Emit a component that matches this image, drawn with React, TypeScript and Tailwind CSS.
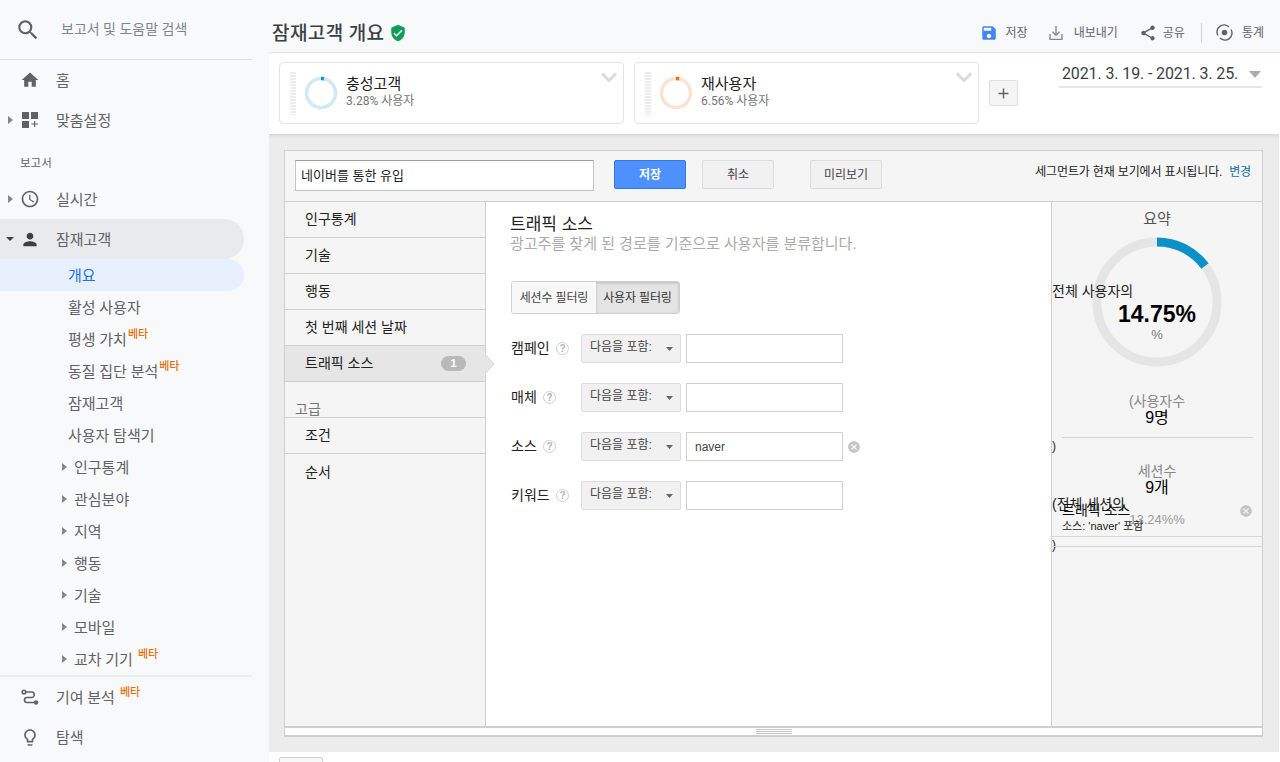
import { MdSearch, MdHome, MdAccessTime, MdPerson, MdLightbulbOutline, MdVerifiedUser, MdSave, MdShare, MdCancel, MdAdd } from "react-icons/md";

const navFont = { fontFamily: '"Roboto", "Noto Sans CJK KR", sans-serif' };

function CaretRight() {
  return (
    <svg width="5" height="8" viewBox="0 0 5 8" className="shrink-0">
      <path d="M0 0l5 4-5 4z" fill="#80868b" />
    </svg>
  );
}

function CaretDown({ color = "#757575", w = 8, h = 4 }: { color?: string; w?: number; h?: number }) {
  return (
    <svg width={w} height={h} viewBox="0 0 8 4" preserveAspectRatio="none" className="shrink-0">
      <path d="M0 0h8l-4 4z" fill={color} />
    </svg>
  );
}

function Beta({ className = "" }: { className?: string }) {
  return <sup className={`text-[11px] font-medium text-[#e8710a] leading-none -top-[7px] relative ${className}`}>베타</sup>;
}

function TopItem({ icon, label, caret, active, beta }: { icon: React.ReactNode; label: string; caret?: "right" | "down"; active?: boolean; beta?: boolean }) {
  return (
    <div className={`relative flex items-center h-10 mr-[25px] rounded-r-[20px] ${active ? "bg-[#e8eaed]" : ""}`}>
      <div className="w-[8px] ml-[6px] flex justify-center">
        {caret === "right" && <CaretRight />}
        {caret === "down" && <CaretDown color="#3c4043" />}
      </div>
      <div className="w-[20px] ml-[6px] flex justify-center text-[#5f6368]">{icon}</div>
      <span className="ml-[16px] mt-[2px] text-[15px] text-[#5f6368] whitespace-nowrap">
        {label}
        {beta && <Beta className="ml-[5px]" />}
      </span>
    </div>
  );
}

function SubItem({ label, active, caret, beta, gap }: { label: string; active?: boolean; caret?: boolean; beta?: boolean; gap?: boolean }) {
  return (
    <div className={`flex items-center h-8 mr-[25px] rounded-r-[20px] ${caret ? "pl-[62px]" : "pl-[68px]"} ${active ? "bg-[#e8f0fe]" : ""}`}>
      {caret && <CaretRight />}
      <span className={`${caret ? "ml-[7px]" : ""} mt-[2px] text-[15px] whitespace-nowrap ${active ? "text-[#1a73e8]" : "text-[#5f6368]"}`}>
        {label}
        {beta && <Beta className={gap ? "ml-[5px]" : "ml-[1px]"} />}
      </span>
    </div>
  );
}

function Sidebar() {
  return (
    <div className="w-[269px] shrink-0 h-[762px] bg-[#f8f9fb] overflow-hidden" style={navFont}>
      <div className="flex items-center h-[60px] mr-[17px] border-b border-[#e0e0e0]">
        <MdSearch size={26} className="ml-[15px] text-[#5f6368]" />
        <span className="ml-[20px] text-[14px] text-[#80868b] -mt-[1px]">보고서 및 도움말 검색</span>
      </div>
      <TopItem label="홈" icon={<MdHome size={20} />} />
      <TopItem
        label="맞춤설정"
        caret="right"
        icon={
          <svg width="16" height="16" viewBox="0 0 16 16" fill="#5f6368">
            <rect width="7" height="7" />
            <rect x="9" width="7" height="7" />
            <rect y="9" width="7" height="7" />
            <path d="M12 9h1.2v2.4H16v1.2h-2.8V15H12v-2.4H9.4v-1.2H12z" />
          </svg>
        }
      />
      <div className="h-[39px] flex items-end pb-[7px] pl-[20px] text-[11.5px] text-[#5f6368]">보고서</div>
      <TopItem label="실시간" caret="right" icon={<MdAccessTime size={20} />} />
      <TopItem label="잠재고객" caret="down" active icon={<MdPerson size={21} className="text-[#3c4043]" />} />
      <SubItem label="개요" active />
      <SubItem label="활성 사용자" />
      <SubItem label="평생 가치" beta />
      <SubItem label="동질 집단 분석" beta />
      <SubItem label="잠재고객" />
      <SubItem label="사용자 탐색기" />
      <SubItem label="인구통계" caret />
      <SubItem label="관심분야" caret />
      <SubItem label="지역" caret />
      <SubItem label="행동" caret />
      <SubItem label="기술" caret />
      <SubItem label="모바일" caret />
      <SubItem label="교차 기기" caret beta gap />
      <div className="h-[2px] mr-[17px] bg-[#ececee]" />
      <TopItem
        label="기여 분석"
        beta
        icon={
          <svg width="18" height="16" viewBox="0 0 18 16" fill="none" stroke="#5f6368" strokeWidth="1.6">
            <circle cx="3" cy="3" r="1.8" />
            <path d="M5 3h5.5a2.6 2.6 0 0 1 0 5.5H6a2.5 2.5 0 0 0 0 5h7" />
            <circle cx="15" cy="13.5" r="2.2" fill="#5f6368" stroke="none" />
          </svg>
        }
      />
      <TopItem label="탐색" icon={<MdLightbulbOutline size={21} />} />
    </div>
  );
}

function Action({ icon, label, className = "" }: { icon: React.ReactNode; label: string; className?: string }) {
  return (
    <div className={`flex items-center text-[12px] text-[#5f6368] ${className}`}>
      {icon}
      <span>{label}</span>
    </div>
  );
}

function Header() {
  return (
    <div className="h-[53px] shrink-0 bg-[#f8f9fb] border-b border-[#e4e4e4] flex items-center pt-[13px] pl-[3px] pr-[16px]">
      <h1 className="text-[19px] font-medium text-[#3c4043] mt-[3px] tracking-[0.4px]">잠재고객 개요</h1>
      <MdVerifiedUser size={18} className="ml-[5px] text-[#0f9d58]" />
      <div className="ml-auto flex items-center">
        <Action icon={<MdSave size={18} className="text-[#4285f4] mr-[8px]" />} label="저장" />
        <Action
          className="ml-[20px]"
          icon={
            <svg width="16" height="16" viewBox="0 0 16 16" fill="none" stroke="#80868b" strokeWidth="1.3" className="mr-[10px]">
              <path d="M8 1v9M4.5 6.8L8 10.3l3.5-3.5M2 9v5.3h12V9" />
            </svg>
          }
          label="내보내기"
        />
        <Action className="ml-[21px]" icon={<MdShare size={18} className="text-[#5f6368] mr-[6px]" />} label="공유" />
        <div className="w-px h-[20px] bg-[#d5d5d5] ml-[16px]" />
        <Action
          className="ml-[14px]"
          icon={
            <svg width="17" height="17" viewBox="0 0 17 17" fill="none" stroke="#5f6368" strokeWidth="1.4" className="mr-[9px]">
              <path d="M2 11.5A7 7 0 0 1 13 3M15 5.5A7 7 0 0 1 4 14" />
              <circle cx="8.5" cy="8.5" r="2.8" fill="#5f6368" stroke="none" />
            </svg>
          }
          label="통계"
        />
      </div>
    </div>
  );
}

function Donut({ color, track, rotate }: { color: string; track: string; rotate: number }) {
  return (
    <svg width="34" height="34" viewBox="0 0 34 34">
      <circle cx="17" cy="17" r="14.5" fill="none" stroke={track} strokeWidth="3.5" />
      <circle cx="17" cy="17" r="14.5" fill="none" stroke={color} strokeWidth="3.5" pathLength={100} strokeDasharray={`${rotate} 100`} transform="rotate(-90 17 17)" />
    </svg>
  );
}

function SegmentCard({ title, sub, color, track, pct }: { title: string; sub: string; color: string; track: string; pct: number }) {
  return (
    <div className="w-[345px] h-[62px] bg-white border border-[#e3e3e3] rounded-[4px] flex items-center relative">
      <div className="w-[6px] h-[43px] ml-[10px] bg-[repeating-linear-gradient(to_bottom,#ececec_0,#ececec_2px,#ffffff_2px,#ffffff_3px)]" />
      <div className="ml-[8px]">
        <Donut color={color} track={track} rotate={pct} />
      </div>
      <div className="ml-[8px] -mt-[4px]">
        <div className="text-[15px] leading-[19px] text-[#212121]">{title}</div>
        <div className="text-[12px] leading-[14px] text-[#757575]">{sub}</div>
      </div>
      <svg width="16" height="10" viewBox="0 0 16 10" fill="none" stroke="#dadada" strokeWidth="3" className="absolute right-[6px] top-[9px]">
        <path d="M1 1.5l7 7 7-7" />
      </svg>
    </div>
  );
}

function SegmentRow() {
  return (
    <div className="h-[81px] shrink-0 bg-white flex pl-[10px] pt-[9px]">
      <SegmentCard title="충성고객" sub="3.28% 사용자" color="#0b91c8" track="#cfe9f6" pct={3.28} />
      <div className="ml-[10px]">
        <SegmentCard title="재사용자" sub="6.56% 사용자" color="#e8710a" track="#fbe3d0" pct={3.5} />
      </div>
      <div className="ml-[10px] mt-[18px] w-[29px] h-[26px] bg-[#f5f5f5] border border-[#dfdfdf] rounded-[2px] flex items-center justify-center text-[#5f6368]">
        <MdAdd size={17} />
      </div>
      <div className="ml-[41px] w-[203px] h-[26px] border-b-2 border-[#e6e6e6] flex items-center pl-[3px]">
        <span className="text-[16px] text-[#3c4043] whitespace-nowrap tracking-[-0.12px]">2021. 3. 19. - 2021. 3. 25.</span>
        <span className="ml-[11px]">
          <CaretDown color="#ababab" w={12} h={7} />
        </span>
      </div>
    </div>
  );
}

function SideTab({ label, active, count }: { label: string; active?: boolean; count?: number }) {
  return (
    <div className={`relative h-9 flex items-center pl-[20px] border-b border-[#cfcfcf] text-[14px] text-[#222] ${active ? "bg-[#e6e6e6]" : ""}`}>
      <span>{label}</span>
      {count !== undefined && (
        <span className="absolute right-[19px] top-[10px] w-[25px] h-[15px] rounded-full bg-[#b9b9b9] text-white text-[11px] font-bold flex items-center justify-center">{count}</span>
      )}
      {active && (
        <svg width="10" height="20" viewBox="0 0 10 20" className="absolute -right-[10px] top-[8px]">
          <path d="M0 0l9 10-9 10z" fill="#ffffff" stroke="#cfcfcf" />
          <path d="M0 0l9 10-9 10z" fill="#e6e6e6" />
        </svg>
      )}
    </div>
  );
}

function FilterRow({ label, value, labelWidth, clear }: { label: string; value?: string; labelWidth: number; clear?: boolean }) {
  return (
    <div className="flex items-center h-[29px] relative">
      <div className="w-[70px] flex items-center">
        <span className="text-[14px] text-[#222]" style={{ width: labelWidth }}>{label}</span>
        <span className="w-[13px] h-[13px] rounded-full border border-[#cfcfcf] flex items-center justify-center text-[10px] font-bold text-[#b5b5b5] ml-[5px]">?</span>
      </div>
      <div className="w-[100px] h-[29px] bg-[#f1f1f1] border border-[#dcdcdc] rounded-[2px] flex items-center pl-[8px] text-[12px] text-[#444]">
        <span className="-mt-[3px]">다음을 포함:</span>
        <span className="ml-[14px]">
          <CaretDown color="#666" w={7} h={4} />
        </span>
      </div>
      <div className="ml-[5px] w-[157px] h-[29px] bg-white border border-[#d0d0d0] flex items-center pl-[8px] text-[12px] text-[#444]">{value}</div>
      {clear && <MdCancel size={14} className="ml-[4px] text-[#c4c4c4]" />}
    </div>
  );
}

function SummaryRing() {
  return (
    <div className="relative h-[135px]">
      <svg width="130" height="130" viewBox="0 0 130 130" className="mx-auto">
        <circle cx="65" cy="65" r="60" fill="none" stroke="#e5e5e5" strokeWidth="9" />
        <circle cx="65" cy="65" r="60" fill="none" stroke="#0b91c8" strokeWidth="9" pathLength={100} strokeDasharray="14.75 100" transform="rotate(-90 65 65)" />
      </svg>
      <div className="absolute left-0 top-[45px] text-[14px] leading-[18px] text-[#222]">전체 사용자의</div>
      <div className="absolute inset-x-0 top-[63px] text-center text-[23px] leading-[28px] font-bold text-black">14.75%</div>
      <div className="absolute inset-x-0 top-[90px] text-center text-[13px] leading-[16px] text-[#777]">%</div>
    </div>
  );
}

function SummaryPanel() {
  return (
    <div className="relative w-[211px] shrink-0 bg-[#f5f5f5] border-l border-[#cfcfcf] overflow-hidden">
      <div className="text-center text-[15px] leading-[18px] text-[#555] mt-[8px] mb-[9px]">요약</div>
      <SummaryRing />
      <div className="text-center text-[14px] leading-[16px] text-[#888] mt-[21px]">(사용자수</div>
      <div className="text-center text-[16px] leading-[18px] text-black">9명</div>
      <div className="h-px bg-[#d6d6d6] ml-[10px] mr-[9px] mt-[10px]" />
      <div className="text-[12px] leading-[16px] text-[#222]">)</div>
      <div className="text-center text-[14px] leading-[16px] text-[#888] mt-[9px]">세션수</div>
      <div className="text-center text-[16px] leading-[18px] text-black">9개</div>
      <div className="text-[14px] leading-[16px] text-[#222] -mt-[1px]">(전체 세션의</div>
      <div className="text-center text-[13px] leading-[16px] text-[#999]">13.24%%</div>
      <div className="text-[12px] leading-[16px] text-[#222] mt-[9px]">)</div>

      {/* chip sits on top of the stat text, same as the source */}
      <div className="absolute left-0 right-0 top-[296px] h-[39px] border-b border-[#d6d6d6] pl-[10px] pt-[3px]">
        <div className="text-[14px] leading-[18px] text-[#111]">트래픽 소스</div>
        <div className="text-[11px] leading-[14px] text-[#222]">소스: 'naver' 포함</div>
        <MdCancel size={14} className="absolute right-[9px] top-[6px] text-[#c4c4c4]" />
      </div>
      <div className="absolute left-0 right-0 top-[344px] h-px bg-[#d6d6d6]" />
    </div>
  );
}

function BuilderPanel() {
  return (
    <div className="mt-[16px] ml-[15px] w-[979px] h-[587px] border border-[#cfcfcf] bg-white flex flex-col" style={{ fontFamily: '"Liberation Sans", "Noto Sans CJK KR", sans-serif' }}>
      <div className="h-[51px] shrink-0 bg-[#f5f5f5] border-b border-[#cfcfcf] flex items-start pt-[9px] pl-[10px] pr-[11px]">
        <div className="w-[299px] h-[31px] bg-white border border-[#c4c4c4] border-t-[#9e9e9e] flex items-center pl-[5px] text-[13px] text-[#222]">네이버를 통한 유입</div>
        <button className="ml-[20px] w-[72px] h-[29px] bg-[#4d90fe] border border-[#3079ed] rounded-[2px] text-white text-[12px] font-bold">저장</button>
        <button className="ml-[16px] w-[72px] h-[29px] bg-[#f1f1f1] border border-[#dcdcdc] rounded-[2px] text-[#444] text-[12px]">취소</button>
        <button className="ml-[36px] w-[72px] h-[29px] bg-[#f1f1f1] border border-[#dcdcdc] rounded-[2px] text-[#444] text-[12px]">미리보기</button>
        <div className="ml-auto text-[12px] leading-[16px] text-[#222] mt-[4px] whitespace-nowrap tracking-[-0.15px]">
          세그먼트가 현재 보기에서 표시됩니다.
          <span className="ml-[7px] text-[#0b6fa8]">변경</span>
        </div>
      </div>

      <div className="flex-1 flex min-h-0">
        <div className="w-[201px] shrink-0 bg-[#f5f5f5] border-r border-[#cfcfcf]">
          <SideTab label="인구통계" />
          <SideTab label="기술" />
          <SideTab label="행동" />
          <SideTab label="첫 번째 세션 날짜" />
          <SideTab label="트래픽 소스" active count={1} />
          <div className="h-[36px] border-b border-[#cfcfcf] pl-[10px] pt-[19px] text-[14px] leading-[16px] text-[#777]">고급</div>
          <SideTab label="조건" />
          <div className="h-9 flex items-center pl-[20px] text-[14px] text-[#222]">
            <span>순서</span>
          </div>
        </div>

        <div className="flex-1 bg-white pl-[24px] pt-[14px]">
          <div className="text-[17px] leading-[18px] text-[#222]">트래픽 소스</div>
          <div className="text-[15px] leading-[20px] text-[#aaa]">광고주를 찾게 된 경로를 기준으로 사용자를 분류합니다.</div>
          <div className="ml-[1px] mt-[27px] flex w-[169px] h-[33px] border border-[#d0d0d0] rounded-[3px] text-[12px] tracking-[-0.15px] overflow-hidden">
            <div className="w-[84px] flex items-center justify-center bg-[#f8f8f8] text-[#444]">세션수 필터링</div>
            <div className="flex-1 flex items-center justify-center bg-[#e4e4e4] text-[#333] shadow-[inset_0_1px_3px_rgba(0,0,0,0.2)]">사용자 필터링</div>
          </div>
          <div className="ml-[1px] mt-[20px] flex flex-col gap-[20px]">
            <FilterRow label="캠페인" labelWidth={40} />
            <FilterRow label="매체" labelWidth={27} />
            <FilterRow label="소스" labelWidth={27} value="naver" clear />
            <FilterRow label="키워드" labelWidth={40} />
          </div>
        </div>

        <SummaryPanel />
      </div>

      <div className="h-[10px] shrink-0 border-t-2 border-[#cfcfcf] bg-white flex flex-col items-center justify-center gap-[1px] border-b border-b-[#cfcfcf]">
        <div className="w-[36px] h-px bg-[#c4c4c4]" />
        <div className="w-[36px] h-px bg-[#c4c4c4]" />
        <div className="w-[36px] h-px bg-[#c4c4c4]" />
      </div>
    </div>
  );
}

export default function App() {
  return (
    <div className="flex w-[1280px] h-[762px] overflow-hidden bg-white" style={navFont}>
      <Sidebar />
      <div className="flex-1 min-w-0 flex flex-col">
        <Header />
        <SegmentRow />
        <div className="h-[618px] shrink-0 mr-px bg-[#ececec] shadow-[inset_0_4px_4px_-3px_rgba(0,0,0,0.12)] overflow-hidden">
          <BuilderPanel />
        </div>
        <div className="flex-1 min-h-0 overflow-hidden bg-white pl-[10px] pt-[5px]">
          <div className="w-[44px] h-[20px] border border-[#cfcfcf] rounded-[2px] bg-[#f8f8f8]" />
        </div>
      </div>
    </div>
  );
}
